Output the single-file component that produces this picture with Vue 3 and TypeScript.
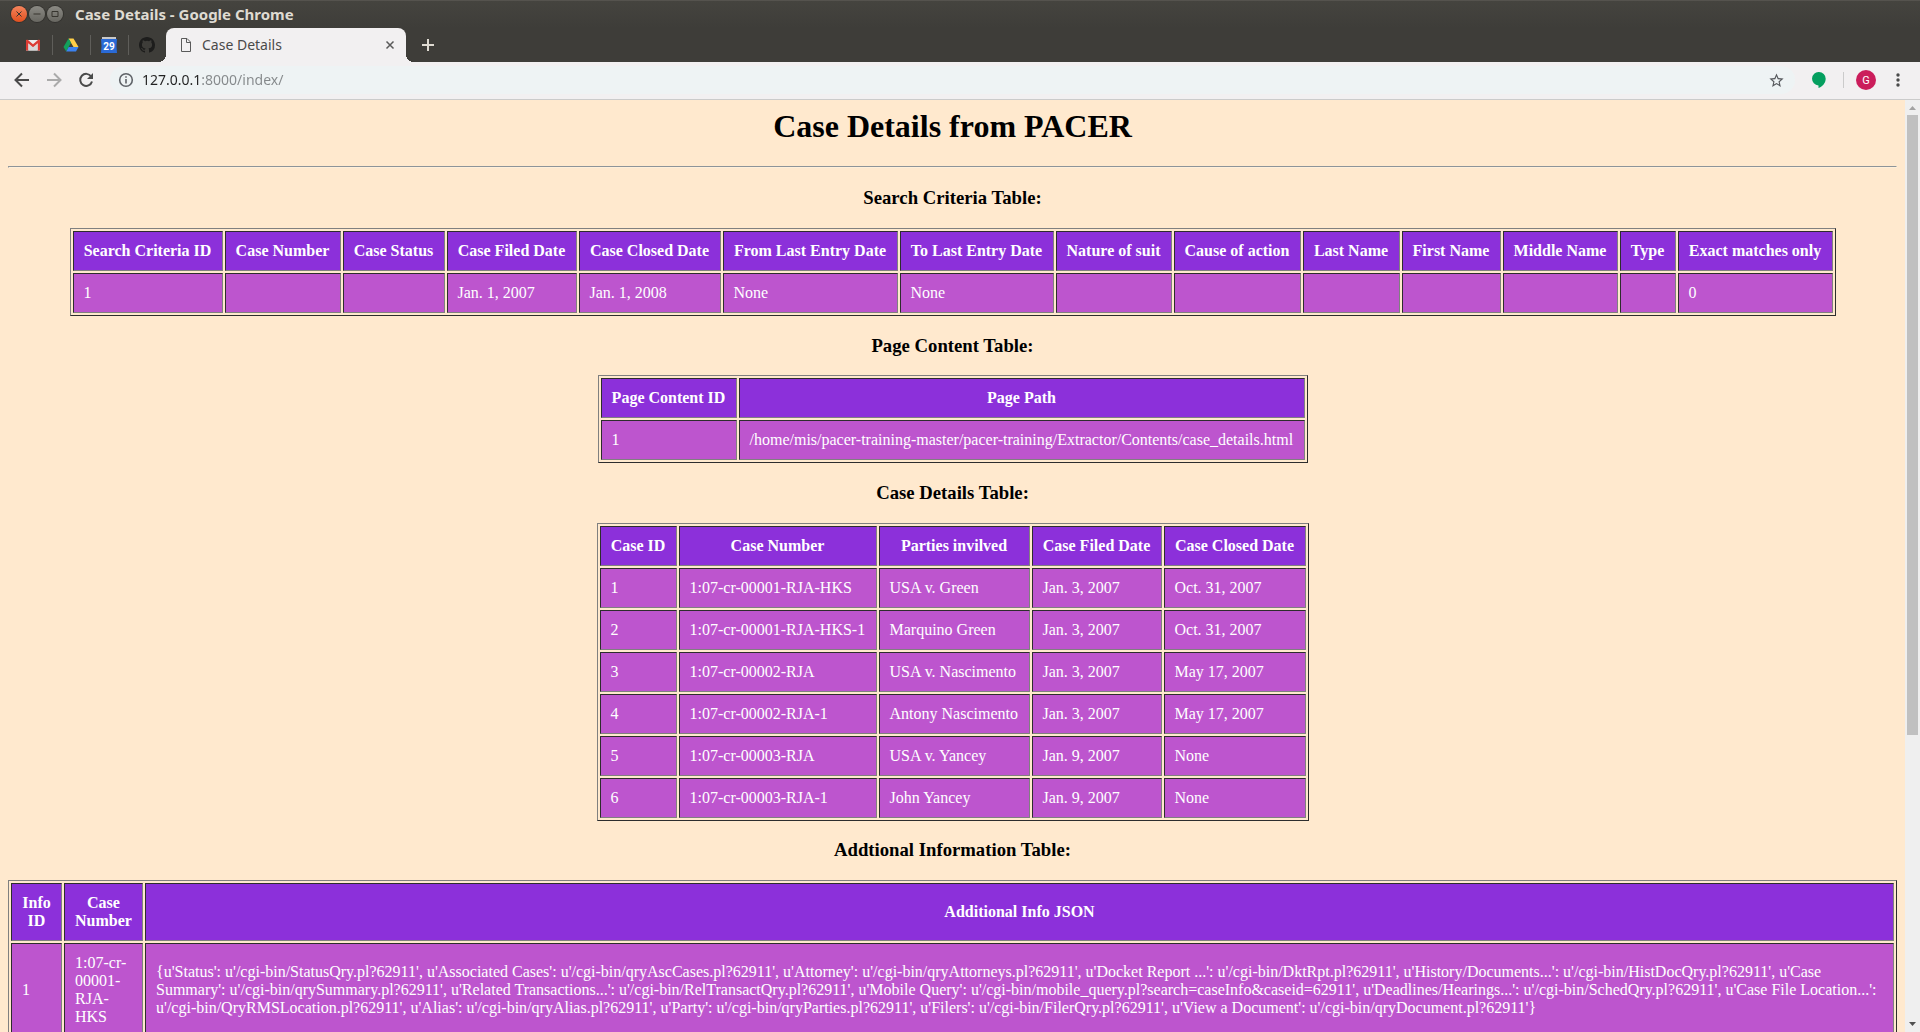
<script setup lang="ts">
import { ref } from 'vue'

interface Column {
  label: string
  width?: number
}

interface DataTable {
  title: string
  columns: Column[]
  rows: string[][]
  wide?: boolean
}

const address = ref('127.0.0.1:8000/index/')

const tables: DataTable[] = [
  {
    title: 'Search Criteria Table:',
    columns: [
      { label: 'Search Criteria ID', width: 150 },
      { label: 'Case Number', width: 116 },
      { label: 'Case Status', width: 102 },
      { label: 'Case Filed Date', width: 130 },
      { label: 'Case Closed Date', width: 142 },
      { label: 'From Last Entry Date', width: 175 },
      { label: 'To Last Entry Date', width: 154 },
      { label: 'Nature of suit', width: 116 },
      { label: 'Cause of action', width: 127 },
      { label: 'Last Name', width: 97 },
      { label: 'First Name', width: 99 },
      { label: 'Middle Name', width: 115 },
      { label: 'Type', width: 56 },
      { label: 'Exact matches only', width: 155 },
    ],
    rows: [['1', '', '', 'Jan. 1, 2007', 'Jan. 1, 2008', 'None', 'None', '', '', '', '', '', '', '0']],
  },
  {
    title: 'Page Content Table:',
    columns: [
      { label: 'Page Content ID', width: 136 },
      { label: 'Page Path', width: 566 },
    ],
    rows: [['1', '/home/mis/pacer-training-master/pacer-training/Extractor/Contents/case_details.html']],
  },
  {
    title: 'Case Details Table:',
    columns: [
      { label: 'Case ID', width: 77 },
      { label: 'Case Number', width: 198 },
      { label: 'Parties invilved', width: 151 },
      { label: 'Case Filed Date', width: 130 },
      { label: 'Case Closed Date', width: 142 },
    ],
    rows: [
      ['1', '1:07-cr-00001-RJA-HKS', 'USA v. Green', 'Jan. 3, 2007', 'Oct. 31, 2007'],
      ['2', '1:07-cr-00001-RJA-HKS-1', 'Marquino Green', 'Jan. 3, 2007', 'Oct. 31, 2007'],
      ['3', '1:07-cr-00002-RJA', 'USA v. Nascimento', 'Jan. 3, 2007', 'May 17, 2007'],
      ['4', '1:07-cr-00002-RJA-1', 'Antony Nascimento', 'Jan. 3, 2007', 'May 17, 2007'],
      ['5', '1:07-cr-00003-RJA', 'USA v. Yancey', 'Jan. 9, 2007', 'None'],
      ['6', '1:07-cr-00003-RJA-1', 'John Yancey', 'Jan. 9, 2007', 'None'],
    ],
  },
  {
    title: 'Addtional Information Table:',
    wide: true,
    columns: [
      { label: 'Info ID', width: 51 },
      { label: 'Case Number', width: 79 },
      { label: 'Additional Info JSON' },
    ],
    rows: [
      [
        '1',
        '1:07-cr-00001-RJA-HKS',
        "{u'Status': u'/cgi-bin/StatusQry.pl?62911', u'Associated Cases': u'/cgi-bin/qryAscCases.pl?62911', u'Attorney': u'/cgi-bin/qryAttorneys.pl?62911', u'Docket Report ...': u'/cgi-bin/DktRpt.pl?62911', u'History/Documents...': u'/cgi-bin/HistDocQry.pl?62911', u'Case Summary': u'/cgi-bin/qrySummary.pl?62911', u'Related Transactions...': u'/cgi-bin/RelTransactQry.pl?62911', u'Mobile Query': u'/cgi-bin/mobile_query.pl?search=caseInfo&caseid=62911', u'Deadlines/Hearings...': u'/cgi-bin/SchedQry.pl?62911', u'Case File Location...': u'/cgi-bin/QryRMSLocation.pl?62911', u'Alias': u'/cgi-bin/qryAlias.pl?62911', u'Party': u'/cgi-bin/qryParties.pl?62911', u'Filers': u'/cgi-bin/FilerQry.pl?62911', u'View a Document': u'/cgi-bin/qryDocument.pl?62911'}",
      ],
    ],
  },
]

const columnStyle = (column: Column) => (column.width ? { width: `${column.width}px` } : undefined)
</script>

<template>
  <div class="window">
    <header class="titlebar">
      <button class="wm close" aria-label="Close window">
        <svg viewBox="0 0 16 16"><path d="M5.5 5.5l5 5M10.5 5.5l-5 5" /></svg>
      </button>
      <button class="wm" aria-label="Minimize window">
        <svg viewBox="0 0 16 16"><path d="M4.5 8h7" /></svg>
      </button>
      <button class="wm" aria-label="Maximize window">
        <svg viewBox="0 0 16 16"><path d="M5 5.5h6v5H5z" /></svg>
      </button>
      <span class="window-title">Case Details - Google Chrome</span>
    </header>

    <nav class="tabstrip" aria-label="Tabs">
      <button class="pinned" aria-label="Gmail">
        <svg viewBox="0 0 16 16">
          <path d="M1 3h14v10.500H1z" fill="#ececec" />
          <path d="M3.500 13.500V7L8 10.500 12.500 7v6.500z" fill="#d8d8d8" />
          <path d="M1 13.500V3.500C1 2.500 2.500 2.500 3 3l5 4.200L13 3c.5-.5 2-.5 2 .5v10h-2.200V6.300L8 10.200 3.200 6.300v7.200z" fill="#dc3c34" />
        </svg>
      </button>
      <button class="pinned" aria-label="Google Drive">
        <svg viewBox="0 0 16 16">
          <path d="M5.500 1.500h5l5 8.500h-5z" fill="#ffcf48" />
          <path d="M5.500 1.500L8 5.800 3.200 14.500.5 10z" fill="#12a05c" />
          <path d="M5.700 10h9.800l-2.500 4.500H3.200z" fill="#3b82f0" />
        </svg>
      </button>
      <button class="pinned" aria-label="Google Calendar">
        <svg viewBox="0 0 16 16">
          <path d="M1 0h14v3H1z" fill="#c9c9c9" />
          <path d="M0 2h16l-.5 7 .5 7H0l.5-7z" fill="#2a6ad6" />
          <text x="8" y="13" text-anchor="middle">29</text>
        </svg>
      </button>
      <button class="pinned" aria-label="GitHub">
        <svg viewBox="0 0 16 16">
          <path fill="#1d1d1c" d="M8 0C3.580 0 0 3.580 0 8c0 3.540 2.290 6.530 5.470 7.590.4.070.55-.17.55-.38 0-.19-.01-.82-.01-1.490-2.010.37-2.530-.49-2.690-.94-.09-.23-.48-.94-.82-1.130-.28-.15-.68-.52-.01-.53.63-.01 1.080.58 1.230.82.72 1.210 1.870.87 2.330.66.07-.52.28-.87.51-1.070-1.780-.2-3.640-.89-3.640-3.950 0-.87.31-1.590.82-2.150-.08-.2-.36-1.020.08-2.120 0 0 .67-.21 2.200.82a7.600 7.600 0 0 1 4 0c1.530-1.040 2.200-.82 2.200-.82.44 1.100.16 1.920.08 2.120.51.56.82 1.270.82 2.150 0 3.070-1.870 3.750-3.650 3.950.29.25.54.73.54 1.480 0 1.070-.01 1.930-.01 2.200 0 .21.15.46.55.38A8.010 8.010 0 0 0 16 8c0-4.420-3.580-8-8-8z" />
        </svg>
      </button>
      <div class="tab">
        <svg class="doc" viewBox="0 0 12 16"><path d="M1.500 1.500h5.500l3.500 3.500v9.500h-9zM6.500 1.500V5.500h4" /></svg>
        <span class="tab-title">Case Details</span>
        <button class="tab-close" aria-label="Close tab">
          <svg viewBox="0 0 12 12"><path d="M2.500 2.500l7 7M9.500 2.500l-7 7" /></svg>
        </button>
      </div>
      <button class="new-tab" aria-label="New tab">
        <svg viewBox="0 0 14 14"><path d="M7 1v12M1 7h12" /></svg>
      </button>
    </nav>

    <div class="toolbar">
      <button class="nav" aria-label="Back">
        <svg viewBox="0 0 16 16"><path d="M15 8H2M8 1.500L1.500 8 8 14.500" /></svg>
      </button>
      <button class="nav off" aria-label="Forward">
        <svg viewBox="0 0 16 16"><path d="M1 8h13M8 1.500L14.500 8 8 14.500" /></svg>
      </button>
      <button class="nav" aria-label="Reload">
        <svg viewBox="0 0 16 16">
          <path d="M13.200 4.500A6 6 0 1 0 14 9.500" />
          <path class="solid" d="M15 1v6H9z" />
        </svg>
      </button>
      <div class="omnibox">
        <svg class="info" viewBox="0 0 16 16">
          <circle cx="8" cy="8" r="6.300" />
          <path d="M8 7v4.500M8 4.200v1.600" />
        </svg>
        <input v-model="address" class="address" type="text" aria-label="Address" spellcheck="false" />
        <button class="star" aria-label="Bookmark this page">
          <svg viewBox="0 0 24 24"><path d="M22 9.240l-7.190-.62L12 2 9.190 8.630 2 9.240l5.460 4.730L5.820 21 12 17.270 18.180 21l-1.630-7.030L22 9.240zM12 15.400l-3.760 2.270 1-4.280-3.320-2.880 4.380-.38L12 6.100l1.710 4.040 4.380.38-3.320 2.880 1 4.280L12 15.400z" /></svg>
        </button>
      </div>
      <button class="hangouts" aria-label="Hangouts">
        <svg viewBox="0 0 14 16"><path d="M7 0a6.700 6.700 0 0 0-.5 13.400V16C10 15 13.700 11 13.700 6.700A6.700 6.700 0 0 0 7 0z" /></svg>
      </button>
      <span class="divider"></span>
      <button class="avatar" aria-label="Profile G">G</button>
      <button class="menu" aria-label="Menu">
        <svg viewBox="0 0 4 16"><circle cx="2" cy="3" r="1.700" /><circle cx="2" cy="8" r="1.700" /><circle cx="2" cy="13" r="1.700" /></svg>
      </button>
    </div>

    <div class="viewport">
      <main class="page">
        <h1>Case Details from PACER</h1>
        <hr />
        <template v-for="table in tables" :key="table.title">
          <h3>{{ table.title }}</h3>
          <table :class="{ wide: table.wide }" :aria-label="table.title">
            <colgroup>
              <col v-for="column in table.columns" :key="column.label" :style="columnStyle(column)" />
            </colgroup>
            <thead>
              <tr>
                <th v-for="column in table.columns" :key="column.label" scope="col">{{ column.label }}</th>
              </tr>
            </thead>
            <tbody>
              <tr v-for="row in table.rows" :key="row[0]">
                <td v-for="(cell, i) in row" :key="i">{{ cell }}</td>
              </tr>
            </tbody>
          </table>
        </template>
      </main>
      <div class="scrollbar" aria-hidden="true">
        <svg class="arrow up" viewBox="0 0 15 15"><path d="M4 10h7L7.500 6z" /></svg>
        <div class="thumb"></div>
        <div class="rest"></div>
        <svg class="arrow" viewBox="0 0 15 15"><path d="M4 5h7L7.500 9z" /></svg>
      </div>
    </div>
  </div>
</template>

<style>
body {
  margin: 0;
}
</style>

<style scoped>
.window {
  display: flex;
  flex-direction: column;
  height: 100vh;
  overflow: hidden;
  background: #ffe9ce;
  font-family: "Noto Sans", "Open Sans", sans-serif;
}

button {
  display: flex;
  align-items: center;
  justify-content: center;
  padding: 0;
  border: 0;
  background: none;
  font: inherit;
}

svg {
  display: block;
  fill: none;
}

.titlebar {
  display: flex;
  align-items: center;
  flex: none;
  height: 28px;
  gap: 2px;
  padding-left: 11px;
  background: linear-gradient(#45443f, #3e3d39);
  box-shadow: inset 0 1px #55534e;
}

.wm {
  width: 16px;
  height: 16px;
  border-radius: 50%;
  background: linear-gradient(#8a8983, #686761);
  box-shadow: 0 0 0 1px #33322e;
}

.wm.close {
  background: linear-gradient(#f4845c, #e2501f);
}

.wm svg {
  width: 16px;
  height: 16px;
  stroke: #37352f;
}

.window-title {
  margin-left: 10px;
  color: #dfdbd2;
  font-size: 15px;
  font-weight: 700;
  line-height: 20px;
}

.tabstrip {
  display: flex;
  align-items: center;
  flex: none;
  height: 34px;
  padding-left: 14px;
  background: #3e3d39;
}

.pinned {
  box-sizing: border-box;
  width: 38px;
  height: 20px;
}

.pinned + .pinned {
  padding-right: 1px;
  border-left: 1px solid #5f5e5a;
}

.pinned svg {
  width: 16px;
  height: 16px;
}

.pinned text {
  fill: #fff;
  font-family: Roboto, sans-serif;
  font-size: 10px;
  font-weight: 700;
}

.tab {
  position: relative;
  display: flex;
  align-items: center;
  box-sizing: border-box;
  width: 240px;
  height: 34px;
  padding: 0 10px 0 14px;
  border-radius: 8px 8px 0 0;
  background: #f2f0f1;
}

.tab::before,
.tab::after {
  position: absolute;
  bottom: 0;
  width: 8px;
  height: 8px;
  content: "";
}

.tab::before {
  right: 100%;
  background: radial-gradient(circle at 0 0, #3e3d39 8px, #f2f0f1 8px);
}

.tab::after {
  left: 100%;
  background: radial-gradient(circle at 100% 0, #3e3d39 8px, #f2f0f1 8px);
}

.doc {
  width: 12px;
  height: 16px;
  stroke: #5a5a5a;
}

.tab-title {
  flex: 1;
  margin-left: 10px;
  color: #4a4a4a;
  font-size: 14px;
  line-height: 20px;
}

.tab-close svg {
  width: 12px;
  height: 12px;
  stroke: #5a5a5a;
  stroke-width: 1.5;
}

.new-tab {
  margin-left: 15px;
}

.new-tab svg {
  width: 14px;
  height: 14px;
  stroke: #dfdbd2;
  stroke-width: 2;
}

.toolbar {
  display: flex;
  align-items: center;
  flex: none;
  box-sizing: border-box;
  height: 38px;
  padding: 0 20px 1px 14px;
  border-bottom: 1px solid #cbcbcb;
  background: #f2f0f1;
}

.nav {
  margin-right: 16px;
}

.nav svg {
  width: 16px;
  height: 16px;
  stroke: #4a4a4a;
  stroke-width: 2;
}

.nav.off svg {
  stroke: #aaa;
}

.nav .solid {
  fill: #4a4a4a;
  stroke: none;
}

.omnibox {
  display: flex;
  align-items: center;
  flex: 1;
  height: 28px;
  padding: 0 10px 0 8px;
  border-radius: 14px;
  background: #eef3f4;
}

.info {
  width: 16px;
  height: 16px;
  stroke: #5f6368;
  stroke-width: 1.6;
}

.address {
  flex: 1;
  min-width: 0;
  height: 20px;
  margin-left: 8px;
  padding: 0;
  border: 0;
  outline: 0;
  background: linear-gradient(to right, #222 57px, #84888a 57px) text;
  color: #222;
  font: 14px/20px "Noto Sans", "Open Sans", sans-serif;
  -webkit-text-fill-color: transparent;
}

.star svg {
  width: 17px;
  height: 17px;
  fill: #55585c;
}

.hangouts {
  margin-left: 17px;
}

.hangouts svg {
  width: 14px;
  height: 16px;
  fill: #059f5f;
}

.divider {
  width: 1px;
  height: 16px;
  margin: 0 12px 0 17px;
  background: #cbcbcb;
}

.avatar {
  width: 20px;
  height: 20px;
  border-radius: 50%;
  background: #cb1d5b;
  color: #fff;
  font-family: Roboto, sans-serif;
  font-size: 11px;
}

.menu {
  margin-left: 20px;
}

.menu svg {
  width: 4px;
  height: 16px;
  fill: #4a4a4a;
}

.viewport {
  display: flex;
  flex: 1;
  min-height: 0;
}

.page {
  flex: 1;
  min-width: 0;
  overflow: hidden;
  padding: 8px;
  color: #000;
  font-family: "Liberation Serif", serif;
  font-size: 16px;
  text-align: center;
}

h1 {
  margin-top: 0;
  font-size: 32px;
}

hr {
  margin: 0;
  border: 1px solid;
  border-color: #8d9499 #ffefd9 #ffefd9 #8d9499;
}

table {
  margin: 0 auto;
  border: 1px solid;
  border-color: #808080 #2d2d2d #2d2d2d #808080;
  border-spacing: 2px;
}

th,
td {
  padding: 10px;
  border: 1px solid;
  border-color: #2d2d2d #808080 #808080 #2d2d2d;
  color: #fff;
}

th {
  background: #8c30da;
}

td {
  background: #bd55ce;
  text-align: left;
}

.wide {
  width: 100%;
}

.scrollbar {
  display: flex;
  flex-direction: column;
  flex: none;
  width: 15px;
  background: #efefef;
}

.arrow {
  flex: none;
  width: 15px;
  height: 15px;
  fill: #505050;
}

.arrow.up {
  fill: #a3a3a3;
}

.thumb {
  flex: 620;
  margin: 0 2px;
  background: #c0c0c0;
}

.rest {
  flex: 282;
}
</style>
